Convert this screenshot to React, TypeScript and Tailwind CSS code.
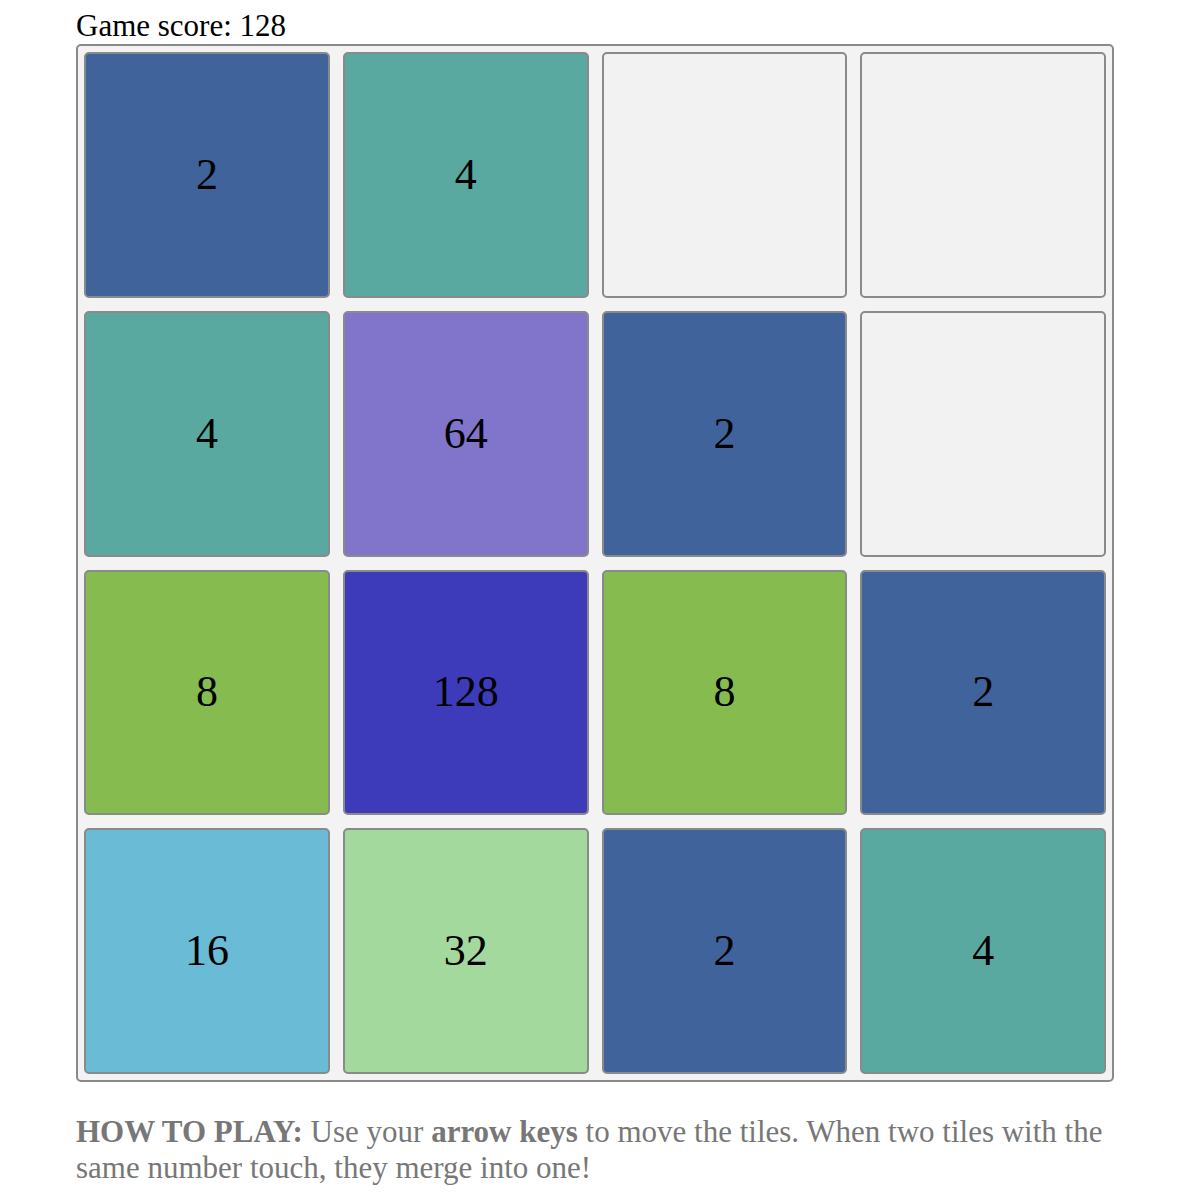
import React from 'react';

type Cell = number | null;

const board: Cell[][] = [
  [2, 4, null, null],
  [4, 64, 2, null],
  [8, 128, 8, 2],
  [16, 32, 2, 4],
];

// background per tile value
const tileColor: Record<number, string> = {
  2: 'bg-[#41639c]',
  4: 'bg-[#5aa9a0]',
  8: 'bg-[#86bc4f]',
  16: 'bg-[#6abbd5]',
  32: 'bg-[#a4d99e]',
  64: 'bg-[#8075cb]',
  128: 'bg-[#3e3bba]',
};

const Tile: React.FC<{ value: Cell }> = ({ value }) => (
  <div
    className={`aspect-square rounded-[5px] border-2 border-[#8a8a8a] flex items-center justify-center text-[44px] text-black ${
      value ? tileColor[value] : 'bg-[#f2f2f2]'
    }`}
  >
    {value ?? ''}
  </div>
);

export default function App() {
  const score = 128;

  return (
    <div className="w-[1200px] min-h-[1200px] bg-white font-['Liberation_Serif','Times_New_Roman',serif]">
      <div className="ml-[76px] w-[1038px] pt-[9px]">
        <div className="text-[31px] leading-[33px] text-black">Game score: {score}</div>

        <div className="mt-[2px] rounded-[5px] border-2 border-[#8a8a8a] bg-[#f3f3f3] p-[6px] grid grid-cols-4 gap-[13px]">
          {board.flat().map((v, i) => (
            <Tile key={i} value={v} />
          ))}
        </div>

        <p className="mt-[32px] text-[31px] leading-[36px] text-[#777777]">
          <b>HOW TO PLAY:</b> Use your <b>arrow keys</b> to move the tiles. When two tiles with the same number
          touch, they merge into one!
        </p>
      </div>
    </div>
  );
}
